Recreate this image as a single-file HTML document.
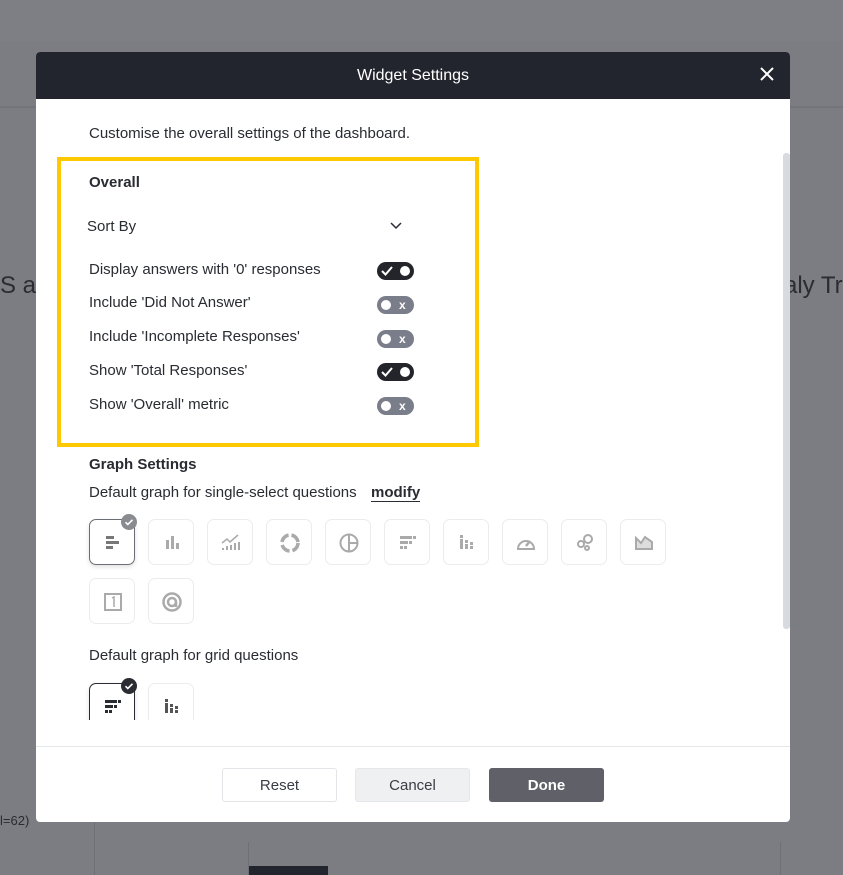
<!DOCTYPE html>
<html><head><style>
*{box-sizing:border-box;margin:0;padding:0}
body{width:843px;height:875px;background:#7c7d82;font-family:"Liberation Sans",sans-serif;position:relative;overflow:hidden;color:#2a2c33}
.abs{position:absolute}
.modal{left:36px;top:52px;width:754px;height:770px;background:#fff;border-radius:4px;overflow:hidden}
.hdr{left:0;top:0;width:754px;height:47px;background:#22252d;color:#fff;font-size:16px;text-align:center;line-height:47px}
.t{font-size:15px;color:#2a2c33;position:absolute;left:53px;white-space:nowrap}
.tog{position:absolute;left:341px;width:37px;height:18px;border-radius:9px}
.on{background:#23252a}
.off{background:#7a7d8a}
.knob{position:absolute;top:4px;width:10px;height:10px;border-radius:50%;background:#fff}
.ib{position:absolute;width:46px;height:46px;border:1px solid #ececef;border-radius:7px}
.ib svg{position:absolute;left:11px;top:11px}
.sel{border:1px solid #6b6d74;box-shadow:0 2px 5px rgba(0,0,0,.12)}
.btn{position:absolute;top:716px;width:115px;height:34px;border-radius:3px;font-size:15px;text-align:center;line-height:34px}
</style></head><body>
<div class="abs" style="left:0;top:0;width:843px;height:41px;background:#7e7f84"></div>
<div class="abs" style="left:0;top:106px;width:843px;height:2px;background:#74757a"></div>
<div class="abs" style="left:0;top:272px;font-size:24px;color:#2a2c33;white-space:nowrap">S a</div>
<div class="abs" style="left:784px;top:272px;font-size:24px;color:#2a2c33;white-space:nowrap">aly Tr</div>
<div class="abs" style="left:0;top:813px;font-size:13px;color:#2a2c33">l=62)</div>
<div class="abs" style="left:94px;top:822px;width:1px;height:53px;background:#6f7075"></div>
<div class="abs" style="left:248px;top:842px;width:1px;height:33px;background:#6f7075"></div>
<div class="abs" style="left:780px;top:842px;width:1px;height:33px;background:#6f7075"></div>
<div class="abs" style="left:249px;top:866px;width:79px;height:9px;background:#22252d"></div>

<div class="abs modal">
<div class="abs hdr">Widget Settings</div>
<svg class="abs" style="left:724px;top:15px" width="14" height="14"><path d="M1 1l12 12M13 1L1 13" stroke="#fff" stroke-width="2"/></svg>
<div class="abs" style="left:747px;top:101px;width:7px;height:476px;background:#d7dade;border-radius:3px"></div>

<div class="t" style="top:73px">Customise the overall settings of the dashboard.</div>
<div class="abs" style="left:21px;top:105px;width:422px;height:290px;border:4px solid #ffc800"></div>
<div class="t" style="top:122px;font-weight:bold">Overall</div>
<div class="t" style="top:166px;left:51px">Sort By</div>
<svg class="abs" style="left:354px;top:170px" width="12" height="8"><path d="M1 1l5 5 5-5" stroke="#2a2c33" stroke-width="1.5" fill="none"/></svg>

<div class="t" style="top:209px">Display answers with '0' responses</div>
<div class="tog on" style="top:210px"><svg class="abs" style="left:4px;top:4px" width="12" height="10"><path d="M1 5l3.5 3.5L11 1" stroke="#fff" stroke-width="2" fill="none"/></svg><div class="knob" style="left:23px"></div></div>
<div class="t" style="top:242px">Include 'Did Not Answer'</div>
<div class="tog off" style="top:244px"><div class="knob" style="left:4px"></div><div class="abs" style="left:22px;top:0;color:#fff;font-size:12px;font-weight:bold;line-height:18px">x</div></div>
<div class="t" style="top:276px">Include 'Incomplete Responses'</div>
<div class="tog off" style="top:278px"><div class="knob" style="left:4px"></div><div class="abs" style="left:22px;top:0;color:#fff;font-size:12px;font-weight:bold;line-height:18px">x</div></div>
<div class="t" style="top:310px">Show 'Total Responses'</div>
<div class="tog on" style="top:311px"><svg class="abs" style="left:4px;top:4px" width="12" height="10"><path d="M1 5l3.5 3.5L11 1" stroke="#fff" stroke-width="2" fill="none"/></svg><div class="knob" style="left:23px"></div></div>
<div class="t" style="top:344px">Show 'Overall' metric</div>
<div class="tog off" style="top:345px"><div class="knob" style="left:4px"></div><div class="abs" style="left:22px;top:0;color:#fff;font-size:12px;font-weight:bold;line-height:18px">x</div></div>

<div class="t" style="top:404px;font-weight:bold">Graph Settings</div>
<div class="t" style="top:432px">Default graph for single-select questions</div>
<div class="abs" style="left:335px;top:432px;font-size:15px;font-weight:bold;color:#2a2c33;border-bottom:1.5px solid #2a2c33;line-height:17px">modify</div>

<div class="ib sel" style="left:53px;top:467px"><svg width="24" height="24"><rect x="5" y="5" width="8" height="3" fill="#777"/><rect x="5" y="10" width="13" height="3" fill="#777"/><rect x="5" y="15" width="7" height="3" fill="#777"/></svg></div>
<div class="abs" style="left:85px;top:462px;width:16px;height:16px;border-radius:50%;background:#8a8b90"><svg width="16" height="16"><path d="M4.5 8.2l2.3 2.3 4.7-4.7" stroke="#fff" stroke-width="1.6" fill="none"/></svg></div>
<div class="ib" style="left:112px;top:467px"><svg width="24" height="24"><rect x="6" y="9" width="3" height="9" fill="#aaa"/><rect x="11" y="5" width="3" height="13" fill="#aaa"/><rect x="16" y="12" width="3" height="6" fill="#aaa"/></svg></div>
<div class="ib" style="left:171px;top:467px"><svg width="24" height="24"><path d="M3 12l5-4 3 3 8-7" stroke="#aaa" stroke-width="1.5" fill="none"/><path d="M4 19v-2M8 19v-4M12 19v-5M16 19v-7M20 19v-8" stroke="#aaa" stroke-width="2"/></svg></div>
<div class="ib" style="left:230px;top:467px"><svg width="24" height="24"><circle cx="12" cy="12" r="8" stroke="#aaa" stroke-width="3.5" fill="none" stroke-dasharray="10 3"/></svg></div>
<div class="ib" style="left:289px;top:467px"><svg width="24" height="24"><circle cx="12" cy="12" r="8.5" stroke="#aaa" stroke-width="2" fill="none"/><path d="M12 3.5v17M12 12h8.5" stroke="#aaa" stroke-width="2"/></svg></div>
<div class="ib" style="left:348px;top:467px"><svg width="24" height="24"><rect x="4" y="5" width="12" height="3" fill="#aaa"/><rect x="17" y="5" width="3" height="3" fill="#aaa"/><rect x="4" y="10" width="8" height="3" fill="#aaa"/><rect x="13" y="10" width="3" height="3" fill="#aaa"/><rect x="4" y="15" width="3" height="3" fill="#aaa"/><rect x="8" y="15" width="3" height="3" fill="#aaa"/></svg></div>
<div class="ib" style="left:407px;top:467px"><svg width="24" height="24"><rect x="5" y="4" width="3" height="3" fill="#aaa"/><rect x="5" y="8" width="3" height="10" fill="#aaa"/><rect x="10" y="9" width="3" height="3" fill="#aaa"/><rect x="10" y="13" width="3" height="5" fill="#aaa"/><rect x="15" y="11" width="3" height="3" fill="#aaa"/><rect x="15" y="15" width="3" height="3" fill="#aaa"/></svg></div>
<div class="ib" style="left:466px;top:467px"><svg width="24" height="24"><path d="M4 18a8 8 0 1 1 16 0z" stroke="#aaa" stroke-width="2" fill="none"/><path d="M12 15l4-5" stroke="#aaa" stroke-width="2.5"/></svg></div>
<div class="ib" style="left:525px;top:467px"><svg width="24" height="24"><circle cx="8" cy="13" r="3" stroke="#aaa" stroke-width="2" fill="none"/><circle cx="15" cy="8" r="4" stroke="#aaa" stroke-width="2" fill="none"/><circle cx="14" cy="17" r="2" stroke="#aaa" stroke-width="2" fill="none"/></svg></div>
<div class="ib" style="left:584px;top:467px"><svg width="24" height="24"><path d="M4 18V7l5 5 4-6 7 5v7z" stroke="#aaa" stroke-width="2" fill="#ddd"/></svg></div>
<div class="ib" style="left:53px;top:526px"><svg width="24" height="24"><rect x="4" y="4" width="16" height="16" stroke="#aaa" stroke-width="2" fill="none"/><path d="M11 8l2-1v10" stroke="#aaa" stroke-width="1.5" fill="none"/></svg></div>
<div class="ib" style="left:112px;top:526px"><svg width="24" height="24"><circle cx="12" cy="12" r="8.5" stroke="#aaa" stroke-width="2.5" fill="none"/><circle cx="12" cy="12" r="4" stroke="#aaa" stroke-width="2.5" fill="none"/><path d="M16 12v5" stroke="#aaa" stroke-width="2.5"/></svg></div>

<div class="t" style="top:595px">Default graph for grid questions</div>
<div class="abs" style="left:0;top:625px;width:740px;height:43px;overflow:hidden">
<div class="ib sel" style="left:53px;top:6px;border-color:#2a2c33"><svg width="24" height="24"><rect x="4" y="5" width="12" height="3" fill="#2a2c33"/><rect x="17" y="5" width="3" height="3" fill="#2a2c33"/><rect x="4" y="10" width="8" height="3" fill="#2a2c33"/><rect x="13" y="10" width="3" height="3" fill="#2a2c33"/><rect x="4" y="15" width="3" height="3" fill="#2a2c33"/><rect x="8" y="15" width="3" height="3" fill="#2a2c33"/></svg></div>
<div class="ib" style="left:112px;top:6px"><svg width="24" height="24"><rect x="5" y="4" width="3" height="3" fill="#555"/><rect x="5" y="8" width="3" height="10" fill="#555"/><rect x="10" y="9" width="3" height="3" fill="#555"/><rect x="10" y="13" width="3" height="5" fill="#555"/><rect x="15" y="11" width="3" height="3" fill="#555"/><rect x="15" y="15" width="3" height="3" fill="#555"/></svg></div>
<div class="abs" style="left:85px;top:1px;width:16px;height:16px;border-radius:50%;background:#2a2c33"><svg width="16" height="16"><path d="M4.5 8.2l2.3 2.3 4.7-4.7" stroke="#fff" stroke-width="1.6" fill="none"/></svg></div>
</div>

<div class="abs" style="left:0;top:694px;width:754px;height:1px;background:#e6e7ea"></div>
<div class="btn" style="left:186px;border:1px solid #e3e4e7;color:#3a3c44;background:#fff">Reset</div>
<div class="btn" style="left:319px;background:#eff0f2;border:1px solid #e6e7ea;color:#3a3c44">Cancel</div>
<div class="btn" style="left:453px;background:#5f6068;color:#fff;font-weight:bold;line-height:36px">Done</div>
</div>
</body></html>
